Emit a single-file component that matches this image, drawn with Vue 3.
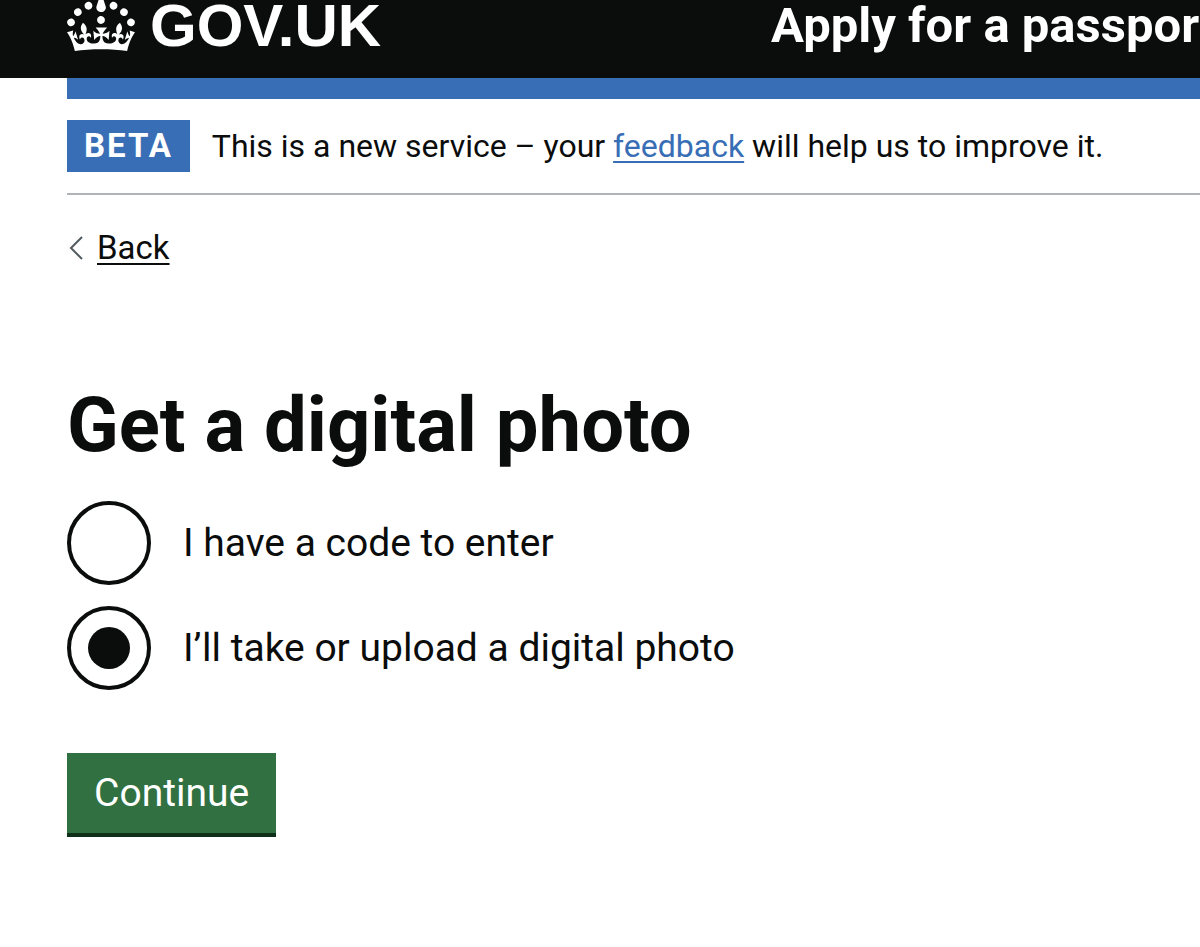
<script setup>
import { ref } from 'vue'

const options = [
  { value: 'code', label: 'I have a code to enter' },
  { value: 'upload', label: 'I’ll take or upload a digital photo' }
]
const choice = ref('upload')
</script>

<template>
  <div class="page">
    <header class="header">
      <a class="logo" href="#" aria-label="GOV.UK">
        <svg class="crown" viewBox="0 6 32 24" aria-hidden="true">
          <path fill="currentColor" d="M22.6 10.4c-1 .4-2-.1-2.4-1-.4-.9.1-2 1-2.4.9-.4 2 .1 2.4 1s-.1 2-1 2.4m-5.9 6.7c-.9.4-2-.1-2.4-1-.4-.9.1-2 1-2.4.9-.4 2 .1 2.4 1s-.1 2-1 2.4m10.8-3.7c-1 .4-2-.1-2.4-1-.4-.9.1-2 1-2.4.9-.4 2 .1 2.4 1s0 2-1 2.4m3.3 4.8c-1 .4-2-.1-2.4-1-.4-.9.1-2 1-2.4.9-.4 2 .1 2.4 1s-.1 2-1 2.4M17 4.7l2.3 1.2V2.5l-2.3.7-.2-.2.9-3h-3.4l.9 3-.2.2c-.1.1-2.3-.7-2.3-.7v3.4L15 4.7c.1.1.1.2.2.2l-1.3 4c-.1.2-.1.4-.1.6 0 1.1.8 2 1.9 2.2h.7c1-.2 1.9-1.1 1.9-2.1 0-.2 0-.4-.1-.6l-1.3-4c-.1-.2 0-.2.1-.3m-7.6 5.7c.9.4 2-.1 2.4-1 .4-.9-.1-2-1-2.4-.9-.4-2 .1-2.4 1s0 2 1 2.4m-5 3c.9.4 2-.1 2.4-1 .4-.9-.1-2-1-2.4-.9-.4-2 .1-2.4 1s.1 2 1 2.4m-3.2 4.8c.9.4 2-.1 2.4-1 .4-.9-.1-2-1-2.4-.9-.4-2 .1-2.4 1s0 2 1 2.4m14.8 11c4.4 0 8.6.3 12.3.8 1.1-4.5 2.4-7 3.7-8.8l-2.5-.9c.2 1.3.3 1.9 0 2.7-.4-.4-.8-1.1-1.1-2.3l-1.2 4c.7-.5 1.3-.8 2-.9-1.1 2.5-2.6 3.1-3.5 3-1.1-.2-1.7-1.2-1.5-2.1.3-1.2 1.5-1.5 2.1-.1 1.1-2.3-.8-3-2-2.3 1.9-1.9 2.1-3.5.6-5.6-2.1 1.6-2.1 3.2-1.2 5.5-1.2-1.4-3.2-.6-2.5 1.6.9-1.4 2.1-.5 1.9.8-.2 1.1-1.7 2.1-3.5 1.9-2.7-.2-2.9-2.1-2.9-3.6.7-.1 1.9.5 2.9 1.9l.4-4.3c-1.1 1.1-2.1 1.4-3.2 1.4.4-1.2 2.1-3 2.1-3h-5.4s1.7 1.9 2.1 3c-1.1 0-2.1-.2-3.2-1.4l.4 4.3c1-1.4 2.2-2 2.9-1.9-.1 1.5-.2 3.4-2.9 3.6-1.9.2-3.4-.8-3.5-1.9-.2-1.3 1-2.2 1.9-.8.7-2.3-1.2-3-2.5-1.6.9-2.2.9-3.9-1.2-5.5-1.5 2-1.3 3.7.6 5.6-1.2-.7-3.1 0-2 2.3.6-1.4 1.8-1.1 2.1.1.2.9-.3 1.9-1.5 2.1-.9.2-2.4-.5-3.5-3 .6 0 1.2.3 2 .9l-1.2-4c-.3 1.1-.7 1.9-1.1 2.3-.3-.8-.2-1.4 0-2.7l-2.9.9C1.3 23 2.6 25.5 3.7 30c3.7-.5 7.9-.8 12.3-.8" />
        </svg>
        <span class="wordmark">GOV.UK</span>
      </a>
      <a class="service" href="#">Apply for a passport</a>
    </header>

    <div class="container">
      <div class="bar"></div>
      <div class="phase">
        <strong class="tag">BETA</strong>
        <span>This is a new service – your <a class="link" href="#">feedback</a> will help us to improve it.</span>
      </div>

      <a class="back" href="#">
        <svg class="chevron" viewBox="0 0 16 26" aria-hidden="true">
          <path d="M15 2 4 13l11 11" fill="none" stroke="#505a5f" stroke-width="2" />
        </svg>
        <span class="back-text">Back</span>
      </a>

      <main class="main">
        <form @submit.prevent>
          <fieldset class="fieldset">
            <legend class="legend"><h1 class="title">Get a digital photo</h1></legend>
            <div class="options">
              <div v-for="o in options" :key="o.value" class="option">
                <input :id="o.value" v-model="choice" class="radio" type="radio" name="photo" :value="o.value">
                <label class="label" :for="o.value">{{ o.label }}</label>
              </div>
            </div>
          </fieldset>
          <button class="button" type="submit">Continue</button>
        </form>
      </main>
    </div>
  </div>
</template>

<style>
body {
  background: #fff;
}
</style>

<style scoped>
.page {
  overflow-x: clip;
  color: #0b0c0c;
  font-family: Roboto, "Noto Sans", sans-serif;
  font-size: 32px;
  line-height: 52px;
}
.header {
  display: flex;
  align-items: flex-start;
  padding: 0 0 27px 67px;
  background: #0b0c0c;
  white-space: nowrap;
}
.logo {
  display: flex;
  flex: 0 0 704px;
  gap: 15px;
  color: #fff;
  text-decoration: none;
}
.crown {
  width: 68px;
  height: 51px;
}
.wordmark {
  font-family: "Liberation Sans", Arial, sans-serif;
  font-size: 60px;
  font-weight: 700;
  line-height: 51px;
}
.service {
  color: #fff;
  font-size: 49px;
  font-weight: 700;
  line-height: 51px;
  text-decoration: none;
}
.container {
  margin-left: 67px;
}
.bar {
  height: 21px;
  background: #386eb5;
}
.phase {
  display: flex;
  align-items: center;
  gap: 22px;
  padding: 21px 0;
  border-bottom: 2px solid #b1b4b6;
  white-space: nowrap;
}
.tag {
  padding: 0 17px;
  background: #386eb5;
  color: #fff;
  font-size: 33px;
  letter-spacing: 2px;
}
.link {
  color: #386eb5;
  text-decoration-thickness: 2px;
  text-underline-offset: 4px;
}
.back {
  display: flex;
  align-items: center;
  gap: 14px;
  width: fit-content;
  margin-top: 27px;
  color: #0b0c0c;
  font-size: 33px;
  text-decoration: none;
}
.chevron {
  width: 16px;
  height: 26px;
}
.back-text {
  text-decoration: underline;
  text-decoration-thickness: 2px;
  text-underline-offset: 4px;
}
.main {
  margin-top: 107px;
}
.fieldset {
  min-width: 0;
  margin: 0;
  padding: 0;
  border: 0;
}
.legend {
  padding: 0;
}
.title {
  margin: 0;
  font-size: 76px;
  font-weight: 700;
  line-height: 88px;
}
.options {
  display: grid;
  gap: 21px;
  margin-top: 32px;
}
.option {
  display: flex;
  align-items: center;
  gap: 32px;
}
.radio {
  appearance: none;
  display: grid;
  place-content: center;
  width: 84px;
  height: 84px;
  margin: 0;
  border: 4px solid #0b0c0c;
  border-radius: 50%;
}
.radio:checked::before {
  content: "";
  width: 42px;
  height: 42px;
  border-radius: 50%;
  background: #0b0c0c;
}
.label {
  font-size: 39px;
}
.button {
  display: block;
  margin-top: 63px;
  padding: 14px 27px;
  border: 0;
  border-bottom: 4px solid #0e2f1a;
  background: #307041;
  color: #fff;
  font-family: inherit;
  font-size: 39px;
  line-height: 52px;
}
</style>
